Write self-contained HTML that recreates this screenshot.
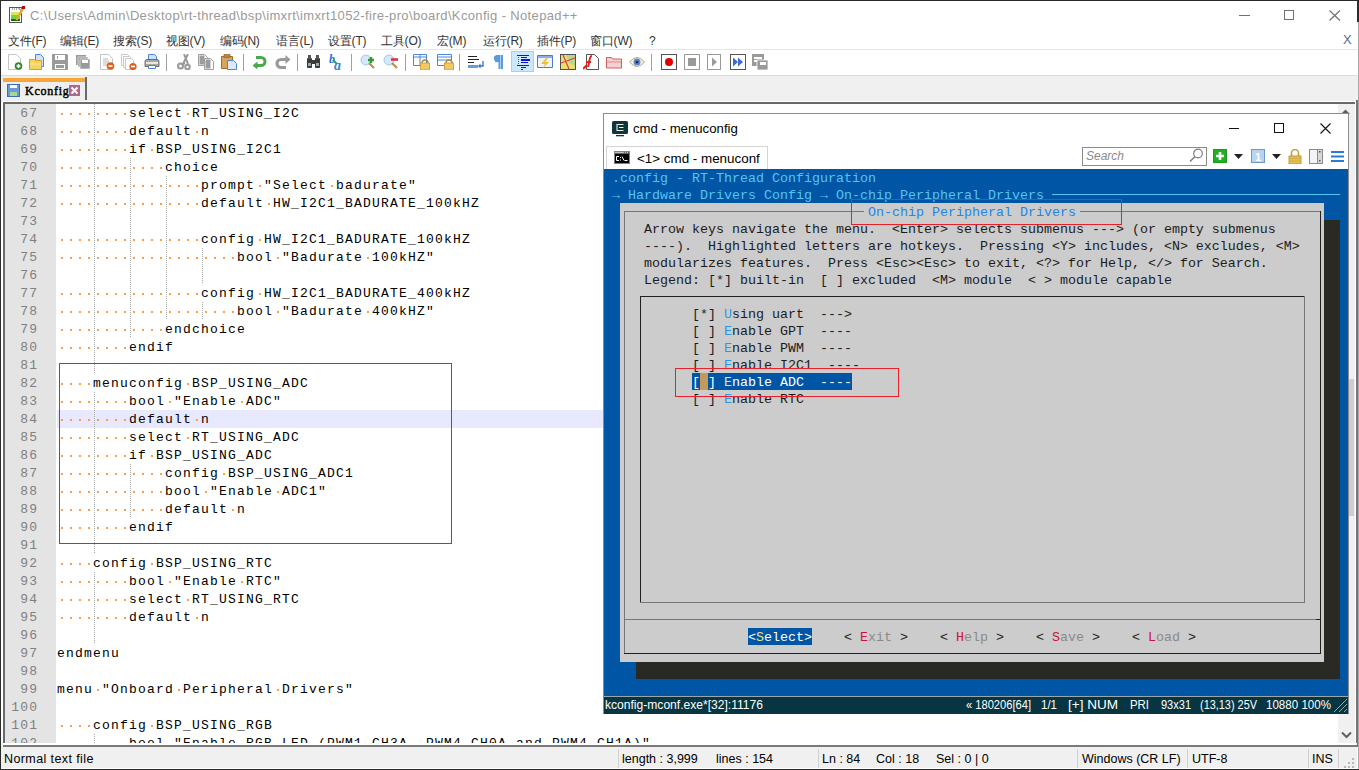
<!DOCTYPE html><html><head><meta charset="utf-8"><style>
*{margin:0;padding:0;box-sizing:border-box}
html,body{width:1359px;height:770px;overflow:hidden;background:#fff}
body{position:relative;font-family:"Liberation Sans",sans-serif}
.a{position:absolute}
.ui{font-family:"Liberation Sans",sans-serif;font-size:12px;color:#000;white-space:pre}
.code{position:absolute;left:57px;margin-top:1px;font-family:"Liberation Mono",monospace;font-size:13px;letter-spacing:1.2px;line-height:18px;height:18px;white-space:pre;color:#000}
.code i{display:inline-block;vertical-align:top;width:9px;height:18px;background:linear-gradient(#ff9d45,#ff9d45) no-repeat 4px 8px/2px 2px}
.ln{position:absolute;left:5px;margin-top:1px;width:33.2px;text-align:right;font-family:"Liberation Mono",monospace;font-size:13px;letter-spacing:1.2px;line-height:18px;height:18px;color:#808080;white-space:pre}
.g{position:absolute;width:1px;background:repeating-linear-gradient(to bottom,#a8a8a8 0,#a8a8a8 1px,transparent 1px,transparent 2px)}
.con{position:absolute;margin-top:1px;font-family:"Liberation Mono",monospace;font-size:13.33px;line-height:17px;height:17px;white-space:pre;letter-spacing:0}
</style></head><body>
<div class="a" style="left:0;top:0;width:1359px;height:1px;background:#2b2b2b"></div>
<div class="a" style="left:0;top:0;width:1px;height:770px;background:#2b2b2b"></div>
<div class="a ui" style="left:30px;top:7px;font-size:13px;letter-spacing:0.35px;color:#9a9a9a;line-height:18px">C:\Users\Admin\Desktop\rt-thread\bsp\imxrt\imxrt1052-fire-pro\board\Kconfig - Notepad++</div>
<svg class="a" style="left:9px;top:6px" width="17" height="18" viewBox="0 0 17 18"><rect x="0.5" y="1.5" width="12" height="15" fill="#fff" stroke="#555" stroke-width="1"/><path d="M9 1.5l3.5 3.5" stroke="#555"/><rect x="2" y="6" width="9" height="9" fill="#7ad040"/><rect x="2" y="6" width="9" height="3" fill="#d8e860"/><rect x="2" y="13" width="9" height="2" fill="#107010"/><path d="M14.5 1.5L7.5 14" stroke="#f0a820" stroke-width="2.4"/><rect x="13" y="0" width="3" height="3" fill="#a01010"/><path d="M3 3h1M5 3h1M7 3h1" stroke="#555" stroke-width="1.2"/></svg>
<div class="a" style="left:1239px;top:15px;width:11px;height:1px;background:#707070"></div>
<div class="a" style="left:1284px;top:10px;width:10px;height:10px;border:1px solid #707070"></div>
<svg class="a" style="left:1329px;top:10px" width="12" height="11"><path d="M0.5 0.5L11 10.5M11 0.5L0.5 10.5" stroke="#707070" stroke-width="1.1" fill="none"/></svg>
<div class="a ui" style="left:8px;top:33px;font-size:12px;letter-spacing:-0.2px;color:#333;line-height:16px">文件(F)</div>
<div class="a ui" style="left:60px;top:33px;font-size:12px;letter-spacing:-0.2px;color:#333;line-height:16px">编辑(E)</div>
<div class="a ui" style="left:113px;top:33px;font-size:12px;letter-spacing:-0.2px;color:#333;line-height:16px">搜索(S)</div>
<div class="a ui" style="left:166px;top:33px;font-size:12px;letter-spacing:-0.2px;color:#333;line-height:16px">视图(V)</div>
<div class="a ui" style="left:220px;top:33px;font-size:12px;letter-spacing:-0.2px;color:#333;line-height:16px">编码(N)</div>
<div class="a ui" style="left:276px;top:33px;font-size:12px;letter-spacing:-0.2px;color:#333;line-height:16px">语言(L)</div>
<div class="a ui" style="left:328px;top:33px;font-size:12px;letter-spacing:-0.2px;color:#333;line-height:16px">设置(T)</div>
<div class="a ui" style="left:381px;top:33px;font-size:12px;letter-spacing:-0.2px;color:#333;line-height:16px">工具(O)</div>
<div class="a ui" style="left:437px;top:33px;font-size:12px;letter-spacing:-0.2px;color:#333;line-height:16px">宏(M)</div>
<div class="a ui" style="left:483px;top:33px;font-size:12px;letter-spacing:-0.2px;color:#333;line-height:16px">运行(R)</div>
<div class="a ui" style="left:537px;top:33px;font-size:12px;letter-spacing:-0.2px;color:#333;line-height:16px">插件(P)</div>
<div class="a ui" style="left:590px;top:33px;font-size:12px;letter-spacing:-0.2px;color:#333;line-height:16px">窗口(W)</div>
<div class="a ui" style="left:649px;top:33px;font-size:12px;letter-spacing:-0.2px;color:#333;line-height:16px">?</div>
<div class="a ui" style="left:1343px;top:32px;font-size:13px;color:#5a6a8a;line-height:16px">X</div>
<div class="a" style="left:1px;top:49px;width:1356px;height:1px;background:#e6e6e6"></div>
<div class="a" style="left:1px;top:75px;width:1356px;height:1px;background:#dadada"></div>
<div class="a" style="left:1px;top:76px;width:1357px;height:26px;background:#f0f0f0"></div>
<div class="a" style="left:3px;top:101px;width:1353px;height:1px;background:#fff"></div>
<svg class="a" style="left:7px;top:54px" width="16" height="16" viewBox="0 0 16 16"><path d="M1.5 0.5h8l4 4v11h-12z" fill="#fff" stroke="#c4c4c4"/><circle cx="11.5" cy="12" r="3.8" fill="#2f8a2f"/><path d="M9.5 12h4M11.5 10v4" stroke="#fff" stroke-width="1.6"/></svg>
<svg class="a" style="left:29px;top:54px" width="16" height="16" viewBox="0 0 16 16"><path d="M6.5 0.5h5l3 3v9h-8z" fill="#cfe2fb" stroke="#4a86d8"/><path d="M0.5 5.5h5l1 1h6v9h-12z" fill="#f7d55a" stroke="#e49a2a"/><path d="M1 10h11" stroke="#fbe9a0"/></svg>
<svg class="a" style="left:52px;top:54px" width="16" height="16" viewBox="0 0 16 16"><path d="M0 0h15l1 1v15h-16z" fill="#9a9a9a"/><rect x="3" y="1" width="10" height="5" fill="#fff"/><rect x="5" y="2" width="1" height="3" fill="#9a9a9a"/><rect x="3" y="10" width="10" height="5" fill="#fff"/><rect x="4" y="11" width="8" height="3" fill="#9a9a9a"/></svg>
<svg class="a" style="left:76px;top:54px" width="16" height="16" viewBox="0 0 16 16"><path d="M0 1h10v10h-10z" fill="#9a9a9a"/><path d="M2 3h10v10h-10z" fill="#9a9a9a" stroke="#fff" stroke-width="0.6"/><path d="M4 5h10v10h-10z" fill="#9a9a9a" stroke="#fff" stroke-width="0.6"/><rect x="6" y="6" width="6" height="3" fill="#fff"/></svg>
<svg class="a" style="left:99px;top:54px" width="16" height="16" viewBox="0 0 16 16"><path d="M1.5 0.5h8l4 4v11h-12z" fill="#fff" stroke="#c4c4c4"/><path d="M4 5h5M4 7h6M4 9h6M4 11h4" stroke="#b8b8b8"/><circle cx="11.5" cy="12" r="3.8" fill="#e2601a"/><path d="M9.5 12h4" stroke="#fff" stroke-width="1.6"/></svg>
<svg class="a" style="left:121px;top:54px" width="16" height="16" viewBox="0 0 16 16"><path d="M0.5 0.5h6l2 2v9h-8z" fill="#fff" stroke="#c8c8c8"/><path d="M2.5 2.5h6l2 2v9h-8z" fill="#fff" stroke="#c8c8c8"/><path d="M4.5 4.5h6l2 2v9h-8z" fill="#fff" stroke="#c8c8c8"/><circle cx="12" cy="12.5" r="3.6" fill="#e2601a"/><path d="M10 12.5h4" stroke="#fff" stroke-width="1.6"/></svg>
<svg class="a" style="left:144px;top:54px" width="16" height="16" viewBox="0 0 16 16"><path d="M4.5 0.5h6l2 2v5h-8z" fill="#cfe2fb" stroke="#4a86d8"/><path d="M1 7.5q0-2 2-2h10q2 0 2 2v5h-14z" fill="#a8a8a8" stroke="#555" stroke-width="0.8"/><rect x="2" y="8" width="12" height="2" fill="#e8e8e8"/><path d="M4.5 11.5h7v3h-7z" fill="#fff" stroke="#4a86d8"/></svg>
<div class="a" style="left:166px;top:54px;width:1px;height:17px;background:#a0a0a0"></div>
<svg class="a" style="left:177px;top:54px" width="16" height="16" viewBox="0 0 16 16"><path d="M11 0L6 10M7 0l4 10" stroke="#9a9a9a" stroke-width="2" fill="none"/><circle cx="3.5" cy="12" r="2.5" fill="none" stroke="#9a9a9a" stroke-width="2"/><circle cx="10.5" cy="13" r="2.3" fill="none" stroke="#9a9a9a" stroke-width="2"/><path d="M5 11l3-2" stroke="#9a9a9a" stroke-width="2"/></svg>
<svg class="a" style="left:198px;top:54px" width="16" height="16" viewBox="0 0 16 16"><path d="M0.5 0.5h6l3 3v8h-9z" fill="#fff" stroke="#a0a0a0"/><rect x="1.5" y="1.5" width="5" height="9" fill="#9c9c9c"/><path d="M6.5 4.5h6l3 3v8h-9z" fill="#fff" stroke="#a0a0a0"/><rect x="7.5" y="5.5" width="5" height="9" fill="#9c9c9c"/></svg>
<svg class="a" style="left:221px;top:54px" width="16" height="16" viewBox="0 0 16 16"><path d="M0.5 2.5h11v12h-11z" fill="#d9a45c" stroke="#a86c28"/><rect x="3" y="0.5" width="6" height="3" fill="#c08040" stroke="#8a5a20" stroke-width="0.6"/><path d="M6.5 6.5h6l3 3v6h-9z" fill="#dde9fb" stroke="#4a86d8"/></svg>
<div class="a" style="left:243px;top:54px;width:1px;height:17px;background:#a0a0a0"></div>
<svg class="a" style="left:252px;top:54px" width="16" height="16" viewBox="0 0 16 16"><path d="M4 3.5h5a4 4 0 0 1 0 8h-5" fill="none" stroke="#4aa84a" stroke-width="3"/><path d="M0.5 11.5l5-4v8z" fill="#4aa84a"/></svg>
<svg class="a" style="left:275px;top:54px" width="16" height="16" viewBox="0 0 16 16"><path d="M11 5.5h-5a4 4 0 0 0 0 8h5" fill="none" stroke="#9a9a9a" stroke-width="3.2"/><path d="M15.5 5.5l-5-4.5v9z" fill="#9a9a9a"/></svg>
<div class="a" style="left:297px;top:54px;width:1px;height:17px;background:#a0a0a0"></div>
<svg class="a" style="left:306px;top:54px" width="16" height="16" viewBox="0 0 16 16"><rect x="1" y="4" width="5" height="10" rx="1" fill="#3a3a3a"/><rect x="9" y="4" width="5" height="10" rx="1" fill="#3a3a3a"/><rect x="5" y="6" width="5" height="4" fill="#3a3a3a"/><rect x="2" y="1" width="3" height="4" fill="#555"/><rect x="10" y="1" width="3" height="4" fill="#555"/><rect x="2" y="9" width="3" height="3" fill="#9aa"/><rect x="10" y="9" width="3" height="3" fill="#9aa"/></svg>
<svg class="a" style="left:329px;top:54px" width="17" height="16" viewBox="0 0 17 16"><text x="0" y="9" font-family="Liberation Serif" font-style="italic" font-weight="bold" font-size="12" fill="#2a70e0">b</text><text x="5" y="16" font-family="Liberation Serif" font-style="italic" font-weight="bold" font-size="14" fill="#3a80e8">a</text><path d="M4 6l4 4" stroke="#2a9a4a" stroke-width="1.8"/></svg>
<div class="a" style="left:351px;top:54px;width:1px;height:17px;background:#a0a0a0"></div>
<svg class="a" style="left:360px;top:54px" width="16" height="16" viewBox="0 0 16 16"><circle cx="6" cy="6" r="5" fill="#d6e8fa" stroke="#a8c8e8"/><path d="M9 9l5 5" stroke="#c08a50" stroke-width="2.2"/><path d="M8 6h6M11 3v6" stroke="#2e9a2e" stroke-width="2.4"/></svg>
<svg class="a" style="left:383px;top:54px" width="16" height="16" viewBox="0 0 16 16"><circle cx="6" cy="6" r="5" fill="#d6e8fa" stroke="#a8c8e8"/><path d="M9 9l5 5" stroke="#c08a50" stroke-width="2.2"/><path d="M8 5.5h7" stroke="#e03040" stroke-width="2.6"/></svg>
<div class="a" style="left:405px;top:54px;width:1px;height:17px;background:#a0a0a0"></div>
<svg class="a" style="left:413px;top:54px" width="17" height="16" viewBox="0 0 17 16"><path d="M0.5 0.5h13v11h-13z" fill="#fff" stroke="#4a86d8"/><path d="M1 3h12" stroke="#4a86d8"/><path d="M7 1v10" stroke="#4a86d8"/><path d="M9 9a3 3 0 0 1 6 0" fill="none" stroke="#a88a40" stroke-width="1.4"/><rect x="7.5" y="9" width="9" height="7" fill="#f2c860" stroke="#c89a30" stroke-width="0.8"/></svg>
<svg class="a" style="left:437px;top:54px" width="17" height="16" viewBox="0 0 17 16"><path d="M0.5 0.5h14v11h-14z" fill="#fff" stroke="#4a86d8"/><path d="M1 3h13M1 6h13" stroke="#4a86d8"/><path d="M9 9a3 3 0 0 1 6 0" fill="none" stroke="#a88a40" stroke-width="1.4"/><rect x="7.5" y="9" width="9" height="7" fill="#f2c860" stroke="#c89a30" stroke-width="0.8"/></svg>
<div class="a" style="left:459px;top:54px;width:1px;height:17px;background:#a0a0a0"></div>
<svg class="a" style="left:468px;top:54px" width="16" height="16" viewBox="0 0 16 16"><path d="M0 2.5h9M0 5.5h11M0 8.5h6" stroke="#222" stroke-width="1"/><rect x="0" y="11" width="10" height="3" fill="#6a9ae0"/><path d="M15 7v5h-4" fill="none" stroke="#3a6ac0" stroke-width="1.3"/><path d="M10 12l2.5-2.5v5z" fill="#3a6ac0"/></svg>
<svg class="a" style="left:493px;top:54px" width="12" height="16" viewBox="0 0 12 16"><path d="M3.5 1h4v14h-2v-7a3.5 3.5 0 0 1 -2-7z" fill="#5a9ae0"/><rect x="8" y="1" width="2" height="14" fill="#5a9ae0"/></svg>
<div class="a" style="left:511px;top:51px;width:23px;height:21px;background:#cce8ff;border:1px solid #99d1ff"></div>
<svg class="a" style="left:515px;top:54px" width="16" height="16" viewBox="0 0 16 16"><path d="M2 1.5h12M6 3.5h6M6 6h9M6 8.5h7M2 11.5h12M6 13.5h5M6 15.5h2" stroke="#1414d8" stroke-width="1"/><rect x="6" y="5" width="9" height="2" fill="#1414d8"/><path d="M3.5 3v8" stroke="#e02828" stroke-dasharray="1 1"/></svg>
<svg class="a" style="left:537px;top:54px" width="16" height="16" viewBox="0 0 16 16"><path d="M0.5 1.5h15v12h-15z" fill="#eef4fb" stroke="#4a7ac8"/><path d="M1 3h14" stroke="#6a9ae0" stroke-width="1.5"/><path d="M9 4l-5 6h4l-3 5 7-7h-4l3-4z" fill="#f0c030"/></svg>
<svg class="a" style="left:560px;top:54px" width="16" height="16" viewBox="0 0 16 16"><rect x="0.5" y="0.5" width="15" height="15" fill="#b8d890" stroke="#505050"/><path d="M1 1l5 0 3 8 6 3v3h-14z" fill="#e8e070"/><path d="M3 1l6 14M1 9l14-5" stroke="#e04040" stroke-width="1.2"/></svg>
<svg class="a" style="left:583px;top:54px" width="16" height="16" viewBox="0 0 16 16"><path d="M3.5 0.5h8l4 4v11h-12z" fill="#fff" stroke="#555"/><path d="M9 2c-3 0-2 5-4 11M3 8h5" stroke="#e02020" stroke-width="2" fill="none"/><path d="M0 15l4-4" stroke="#e02020" stroke-width="2"/></svg>
<svg class="a" style="left:606px;top:54px" width="16" height="16" viewBox="0 0 16 16"><path d="M0.5 3.5h5l1 1.5h9v9h-15z" fill="#f6d0d0" stroke="#d06060"/><path d="M1 8h14" stroke="#d88"/></svg>
<svg class="a" style="left:629px;top:54px" width="16" height="16" viewBox="0 0 16 16"><path d="M0.5 8q7.5-9 15 0q-7.5 9-15 0z" fill="#f4f0e8" stroke="#c8a070"/><circle cx="8" cy="8" r="3.5" fill="#5a8ad0"/><circle cx="8" cy="8" r="1.5" fill="#203060"/></svg>
<div class="a" style="left:651px;top:54px;width:1px;height:17px;background:#a0a0a0"></div>
<svg class="a" style="left:661px;top:54px" width="16" height="16" viewBox="0 0 16 16"><rect x="0.5" y="0.5" width="15" height="15" fill="#fff" stroke="#555"/><circle cx="8" cy="8" r="4" fill="#e00000"/></svg>
<svg class="a" style="left:684px;top:54px" width="16" height="16" viewBox="0 0 16 16"><rect x="0.5" y="0.5" width="15" height="15" fill="#fff" stroke="#999"/><rect x="4" y="4" width="8" height="8" fill="#9a9a9a"/></svg>
<svg class="a" style="left:707px;top:54px" width="14" height="16" viewBox="0 0 14 16"><rect x="0.5" y="0.5" width="13" height="15" fill="#fff" stroke="#999"/><path d="M5 3.5l5 4.5-5 4.5z" fill="#9a9a9a"/></svg>
<svg class="a" style="left:730px;top:54px" width="16" height="16" viewBox="0 0 16 16"><rect x="0.5" y="0.5" width="15" height="15" fill="#fff" stroke="#555"/><path d="M3 3.5l5 4.5-5 4.5zM8 3.5l5 4.5-5 4.5z" fill="#3a6ad8"/></svg>
<svg class="a" style="left:752px;top:54px" width="16" height="16" viewBox="0 0 16 16"><rect x="0" y="0" width="12" height="12" fill="#9a9a9a"/><rect x="2" y="3" width="8" height="2" fill="#fff"/><rect x="2" y="6" width="3" height="2" fill="#fff"/><rect x="5" y="6" width="11" height="10" fill="#9a9a9a" stroke="#fff" stroke-width="0.8"/><rect x="8" y="8" width="6" height="3" fill="#fff"/></svg>
<div class="a" style="left:3px;top:77px;width:83px;height:24px;background:#efefef"></div>
<div class="a" style="left:3px;top:78px;width:82px;height:4px;background:#faa538"></div>
<div class="a" style="left:85px;top:77px;width:2px;height:23px;background:#6a6a6a"></div>
<svg class="a" style="left:7px;top:84px" width="13" height="13" viewBox="0 0 13 13"><rect x="0.5" y="0.5" width="12" height="12" fill="#6a9ad8" stroke="#3a6ab8"/><rect x="3" y="1" width="7" height="3" fill="#fff"/><rect x="3" y="8" width="7" height="4" fill="#a8d890"/></svg>
<div class="a" style="left:25px;top:83px;font-family:'Liberation Serif',serif;font-size:12px;line-height:16px;font-weight:normal;-webkit-text-stroke:0.45px #000;color:#000;letter-spacing:0.75px">Kconfig</div>
<svg class="a" style="left:69px;top:85px" width="11" height="11" viewBox="0 0 11 11"><rect x="0" y="0" width="11" height="11" fill="#b06888"/><path d="M2.5 2.5l6 6M8.5 2.5l-6 6" stroke="#fff" stroke-width="2"/></svg>
<div class="a" style="left:3px;top:102px;width:1353px;height:2px;background:#6a6a6a"></div>
<div class="a" style="left:3px;top:102px;width:2px;height:643px;background:#6a6a6a"></div>
<div class="a" style="left:5px;top:104px;width:51px;height:640px;background:#e4e4e4"></div>
<div class="a" style="left:57px;top:410px;width:1281px;height:18px;background:#e8e8ff"></div>
<div class="a" style="left:1338px;top:104px;width:17px;height:639px;background:#f0f0f0"></div>
<svg class="a" style="left:1341px;top:109px" width="9" height="5"><path d="M0 5L4.5 0.5L9 5z" fill="#606060"/></svg>
<svg class="a" style="left:1341px;top:731px" width="11" height="8"><path d="M1 1.5l4.5 4.5L10 1.5" stroke="#606060" stroke-width="2" fill="none"/></svg>
<div class="a" style="left:1355px;top:102px;width:1px;height:644px;background:#fff"></div>
<div class="a" style="left:1356px;top:100px;width:2px;height:647px;background:#767676"></div>
<div class="a" style="left:1357px;top:0;width:2px;height:22px;background:#2b2b2b"></div>
<div class="a" style="left:1358px;top:22px;width:1px;height:748px;background:#a8a8a8"></div>
<div class="a" style="left:1349px;top:379px;width:5px;height:137px;background:#cdcdcd"></div>
<div class="g" style="left:94px;top:104px;height:270px"></div>
<div class="g" style="left:94px;top:392px;height:162px"></div>
<div class="g" style="left:94px;top:572px;height:72px"></div>
<div class="g" style="left:94px;top:734px;height:10px"></div>
<div class="g" style="left:130px;top:158px;height:180px"></div>
<div class="g" style="left:130px;top:464px;height:54px"></div>
<div class="g" style="left:166px;top:176px;height:144px"></div>
<div class="g" style="left:202px;top:248px;height:36px"></div>
<div class="g" style="left:202px;top:302px;height:18px"></div>
<div class="ln" style="top:104px">67</div>
<div class="code" style="top:104px"><i></i><i></i><i></i><i></i><i></i><i></i><i></i><i></i>select<i></i>RT_USING_I2C</div>
<div class="ln" style="top:122px">68</div>
<div class="code" style="top:122px"><i></i><i></i><i></i><i></i><i></i><i></i><i></i><i></i>default<i></i>n</div>
<div class="ln" style="top:140px">69</div>
<div class="code" style="top:140px"><i></i><i></i><i></i><i></i><i></i><i></i><i></i><i></i>if<i></i>BSP_USING_I2C1</div>
<div class="ln" style="top:158px">70</div>
<div class="code" style="top:158px"><i></i><i></i><i></i><i></i><i></i><i></i><i></i><i></i><i></i><i></i><i></i><i></i>choice</div>
<div class="ln" style="top:176px">71</div>
<div class="code" style="top:176px"><i></i><i></i><i></i><i></i><i></i><i></i><i></i><i></i><i></i><i></i><i></i><i></i><i></i><i></i><i></i><i></i>prompt<i></i>&quot;Select<i></i>badurate&quot;</div>
<div class="ln" style="top:194px">72</div>
<div class="code" style="top:194px"><i></i><i></i><i></i><i></i><i></i><i></i><i></i><i></i><i></i><i></i><i></i><i></i><i></i><i></i><i></i><i></i>default<i></i>HW_I2C1_BADURATE_100kHZ</div>
<div class="ln" style="top:212px">73</div>
<div class="ln" style="top:230px">74</div>
<div class="code" style="top:230px"><i></i><i></i><i></i><i></i><i></i><i></i><i></i><i></i><i></i><i></i><i></i><i></i><i></i><i></i><i></i><i></i>config<i></i>HW_I2C1_BADURATE_100kHZ</div>
<div class="ln" style="top:248px">75</div>
<div class="code" style="top:248px"><i></i><i></i><i></i><i></i><i></i><i></i><i></i><i></i><i></i><i></i><i></i><i></i><i></i><i></i><i></i><i></i><i></i><i></i><i></i><i></i>bool<i></i>&quot;Badurate<i></i>100kHZ&quot;</div>
<div class="ln" style="top:266px">76</div>
<div class="ln" style="top:284px">77</div>
<div class="code" style="top:284px"><i></i><i></i><i></i><i></i><i></i><i></i><i></i><i></i><i></i><i></i><i></i><i></i><i></i><i></i><i></i><i></i>config<i></i>HW_I2C1_BADURATE_400kHZ</div>
<div class="ln" style="top:302px">78</div>
<div class="code" style="top:302px"><i></i><i></i><i></i><i></i><i></i><i></i><i></i><i></i><i></i><i></i><i></i><i></i><i></i><i></i><i></i><i></i><i></i><i></i><i></i><i></i>bool<i></i>&quot;Badurate<i></i>400kHZ&quot;</div>
<div class="ln" style="top:320px">79</div>
<div class="code" style="top:320px"><i></i><i></i><i></i><i></i><i></i><i></i><i></i><i></i><i></i><i></i><i></i><i></i>endchoice</div>
<div class="ln" style="top:338px">80</div>
<div class="code" style="top:338px"><i></i><i></i><i></i><i></i><i></i><i></i><i></i><i></i>endif</div>
<div class="ln" style="top:356px">81</div>
<div class="ln" style="top:374px">82</div>
<div class="code" style="top:374px"><i></i><i></i><i></i><i></i>menuconfig<i></i>BSP_USING_ADC</div>
<div class="ln" style="top:392px">83</div>
<div class="code" style="top:392px"><i></i><i></i><i></i><i></i><i></i><i></i><i></i><i></i>bool<i></i>&quot;Enable<i></i>ADC&quot;</div>
<div class="ln" style="top:410px">84</div>
<div class="code" style="top:410px"><i></i><i></i><i></i><i></i><i></i><i></i><i></i><i></i>default<i></i>n</div>
<div class="ln" style="top:428px">85</div>
<div class="code" style="top:428px"><i></i><i></i><i></i><i></i><i></i><i></i><i></i><i></i>select<i></i>RT_USING_ADC</div>
<div class="ln" style="top:446px">86</div>
<div class="code" style="top:446px"><i></i><i></i><i></i><i></i><i></i><i></i><i></i><i></i>if<i></i>BSP_USING_ADC</div>
<div class="ln" style="top:464px">87</div>
<div class="code" style="top:464px"><i></i><i></i><i></i><i></i><i></i><i></i><i></i><i></i><i></i><i></i><i></i><i></i>config<i></i>BSP_USING_ADC1</div>
<div class="ln" style="top:482px">88</div>
<div class="code" style="top:482px"><i></i><i></i><i></i><i></i><i></i><i></i><i></i><i></i><i></i><i></i><i></i><i></i>bool<i></i>&quot;Enable<i></i>ADC1&quot;</div>
<div class="ln" style="top:500px">89</div>
<div class="code" style="top:500px"><i></i><i></i><i></i><i></i><i></i><i></i><i></i><i></i><i></i><i></i><i></i><i></i>default<i></i>n</div>
<div class="ln" style="top:518px">90</div>
<div class="code" style="top:518px"><i></i><i></i><i></i><i></i><i></i><i></i><i></i><i></i>endif</div>
<div class="ln" style="top:536px">91</div>
<div class="ln" style="top:554px">92</div>
<div class="code" style="top:554px"><i></i><i></i><i></i><i></i>config<i></i>BSP_USING_RTC</div>
<div class="ln" style="top:572px">93</div>
<div class="code" style="top:572px"><i></i><i></i><i></i><i></i><i></i><i></i><i></i><i></i>bool<i></i>&quot;Enable<i></i>RTC&quot;</div>
<div class="ln" style="top:590px">94</div>
<div class="code" style="top:590px"><i></i><i></i><i></i><i></i><i></i><i></i><i></i><i></i>select<i></i>RT_USING_RTC</div>
<div class="ln" style="top:608px">95</div>
<div class="code" style="top:608px"><i></i><i></i><i></i><i></i><i></i><i></i><i></i><i></i>default<i></i>n</div>
<div class="ln" style="top:626px">96</div>
<div class="ln" style="top:644px">97</div>
<div class="code" style="top:644px">endmenu</div>
<div class="ln" style="top:662px">98</div>
<div class="ln" style="top:680px">99</div>
<div class="code" style="top:680px">menu<i></i>&quot;Onboard<i></i>Peripheral<i></i>Drivers&quot;</div>
<div class="ln" style="top:698px">100</div>
<div class="ln" style="top:716px">101</div>
<div class="code" style="top:716px"><i></i><i></i><i></i><i></i>config<i></i>BSP_USING_RGB</div>
<div class="ln" style="top:734px">102</div>
<div class="code" style="top:734px"><i></i><i></i><i></i><i></i><i></i><i></i><i></i><i></i>bool<i></i>&quot;Enable<i></i>RGB<i></i>LED<i></i>(PWM1_CH3A,<i></i>PWM4_CH0A<i></i>and<i></i>PWM4_CH1A)&quot;</div>
<div class="a" style="left:1px;top:743px;width:1356px;height:27px;background:#f0f0f0"></div>
<div class="a" style="left:3px;top:743px;width:1353px;height:2px;background:#fff"></div>
<div class="a" style="left:3px;top:745px;width:1354px;height:2px;background:#7a7a7a"></div>
<div class="a" style="left:1px;top:768px;width:1356px;height:1px;background:#fff"></div>
<div class="a" style="left:0;top:769px;width:1359px;height:1px;background:#2b2b2b"></div>
<div class="a ui" style="left:4px;top:751px;font-size:12.5px;letter-spacing:0.4px;color:#000;line-height:16px">Normal text file</div>
<div class="a" style="left:618px;top:749px;width:1px;height:19px;background:#d0d0d0"></div>
<div class="a" style="left:818px;top:749px;width:1px;height:19px;background:#d0d0d0"></div>
<div class="a" style="left:1077px;top:749px;width:1px;height:19px;background:#d0d0d0"></div>
<div class="a" style="left:1187px;top:749px;width:1px;height:19px;background:#d0d0d0"></div>
<div class="a" style="left:1308px;top:749px;width:1px;height:19px;background:#d0d0d0"></div>
<div class="a" style="left:1338px;top:749px;width:1px;height:19px;background:#d0d0d0"></div>
<div class="a ui" style="left:622px;top:751px;font-size:12.5px;color:#000;line-height:16px">length : 3,999</div>
<div class="a ui" style="left:716px;top:751px;font-size:12.5px;color:#000;line-height:16px">lines : 154</div>
<div class="a ui" style="left:822px;top:751px;font-size:12.5px;color:#000;line-height:16px">Ln : 84</div>
<div class="a ui" style="left:876px;top:751px;font-size:12.5px;color:#000;line-height:16px">Col : 18</div>
<div class="a ui" style="left:936px;top:751px;font-size:12.5px;color:#000;line-height:16px">Sel : 0 | 0</div>
<div class="a ui" style="left:1082px;top:751px;font-size:12.5px;color:#000;line-height:16px">Windows (CR LF)</div>
<div class="a ui" style="left:1192px;top:751px;font-size:12.5px;color:#000;line-height:16px">UTF-8</div>
<div class="a ui" style="left:1312px;top:751px;font-size:12.5px;color:#000;line-height:16px">INS</div>
<div class="a" style="left:1352px;top:766px;width:2px;height:2px;background:#b8b8b8"></div>
<div class="a" style="left:1348px;top:766px;width:2px;height:2px;background:#b8b8b8"></div>
<div class="a" style="left:1344px;top:766px;width:2px;height:2px;background:#b8b8b8"></div>
<div class="a" style="left:1352px;top:762px;width:2px;height:2px;background:#b8b8b8"></div>
<div class="a" style="left:1348px;top:762px;width:2px;height:2px;background:#b8b8b8"></div>
<div class="a" style="left:1352px;top:758px;width:2px;height:2px;background:#b8b8b8"></div>
<div class="a" style="left:59px;top:363px;width:393px;height:181px;border:1px solid #e0202a"></div>
<div class="a" style="left:603px;top:113px;width:746px;height:601px;background:#fff;border:1px solid #8c8c8c"></div>
<svg class="a" style="left:612px;top:121px" width="16" height="16" viewBox="0 0 16 16"><rect x="0" y="0" width="16" height="13" rx="1.5" fill="#0d3540"/><path d="M11.5 3.5h-6.5v6h6.5M7 6.5h4.5" stroke="#f4ecd4" stroke-width="1.1" fill="none"/><rect x="4" y="14" width="8" height="1.3" fill="#0d3540"/></svg>
<div class="a ui" style="left:633px;top:120px;font-size:13.2px;line-height:18px;color:#000">cmd - menuconfig</div>
<div class="a" style="left:1229px;top:128px;width:10px;height:1px;background:#111"></div>
<div class="a" style="left:1274px;top:123px;width:10px;height:10px;border:1px solid #111"></div>
<svg class="a" style="left:1320px;top:123px" width="11" height="11"><path d="M0.5 0.5L10.5 10.5M10.5 0.5L0.5 10.5" stroke="#111" stroke-width="1.1"/></svg>
<div class="a" style="left:606px;top:146px;width:162px;height:23px;background:#fff;border:1px solid #d4d4d4;border-bottom:none"></div>
<svg class="a" style="left:614px;top:151px" width="16" height="13" viewBox="0 0 16 13"><rect x="0.5" y="0.5" width="15" height="12" fill="#000" stroke="#808080"/><rect x="1" y="1" width="14" height="1.5" fill="#c0c0c0"/><path d="M5 5.5h-2.5v4h2.5M6.5 6v1M6.5 8.5v1M8 5.5l2 4M10.5 9.5h3" stroke="#fff" stroke-width="1" fill="none"/><path d="M10 1.5h5" stroke="#606060" stroke-dasharray="1 1"/></svg>
<div class="a ui" style="left:637px;top:150px;font-size:13.4px;line-height:18px;color:#000">&lt;1&gt; cmd - menuconf</div>
<div class="a" style="left:1082px;top:147px;width:125px;height:19px;background:#fff;border:1px solid #8a8a8a"></div>
<div class="a ui" style="left:1086px;top:149px;font-size:12px;line-height:15px;color:#8a8a8a;font-style:italic">Search</div>
<svg class="a" style="left:1189px;top:148px" width="15" height="15" viewBox="0 0 15 15"><circle cx="9" cy="5.5" r="4.3" fill="none" stroke="#808080" stroke-width="1.2"/><path d="M6 8.5L1 13.5" stroke="#808080" stroke-width="1.6"/></svg>
<svg class="a" style="left:1213px;top:149px" width="14" height="14" viewBox="0 0 14 14"><rect x="0" y="0" width="14" height="14" rx="1.5" fill="#22b022" stroke="#108010"/><path d="M7 3v8M3 7h8" stroke="#fff" stroke-width="2.6"/></svg>
<svg class="a" style="left:1234px;top:154px" width="9" height="5" viewBox="0 0 9 5"><path d="M0 0h9l-4.5 5z" fill="#222"/></svg>
<svg class="a" style="left:1251px;top:149px" width="14" height="14" viewBox="0 0 14 14"><rect x="0.5" y="0.5" width="13" height="13" fill="#b8d4f0" stroke="#6a9ad0"/><text x="4" y="12" font-family="Liberation Sans" font-weight="bold" font-size="11" fill="#fff">1</text></svg>
<svg class="a" style="left:1272px;top:154px" width="9" height="5" viewBox="0 0 9 5"><path d="M0 0h9l-4.5 5z" fill="#222"/></svg>
<svg class="a" style="left:1288px;top:149px" width="14" height="15" viewBox="0 0 14 15"><path d="M3.5 7v-3a3.5 3.5 0 0 1 7 0v3" fill="none" stroke="#c8a040" stroke-width="1.6"/><rect x="1" y="7" width="12" height="8" fill="#e8c050" stroke="#b08a30" stroke-width="0.8"/><path d="M2 9.5h10M2 12h10" stroke="#c8a040" stroke-width="0.7"/></svg>
<svg class="a" style="left:1309px;top:149px" width="14" height="15" viewBox="0 0 14 15"><rect x="0.5" y="0.5" width="13" height="14" fill="#f4f4f4" stroke="#8a8a8a"/><rect x="8" y="1" width="5" height="13" fill="#d8d8d8"/><path d="M8.5 1v13" stroke="#8a8a8a"/><rect x="10" y="2" width="1.5" height="1.5" fill="#555"/><rect x="10" y="11" width="1.5" height="1.5" fill="#555"/></svg>
<svg class="a" style="left:1331px;top:150px" width="13" height="13" viewBox="0 0 13 13"><path d="M0 2h13M0 6.5h13M0 11h13" stroke="#2a7ad8" stroke-width="2"/></svg>
<div class="a" style="left:604px;top:169px;width:744px;height:527px;background:#0055a5"></div>
<div class="a" style="left:604px;top:696px;width:744px;height:18px;background:#073642;border-top:1px solid #9aa6a8"></div>
<div class="a ui" style="left:605px;top:697px;font-size:13px;line-height:16px;color:#fff;transform-origin:0 0;transform:scaleX(0.929)">kconfig-mconf.exe*[32]:11176</div>
<div class="a ui" style="left:966px;top:697px;font-size:13px;line-height:16px;color:#fff;transform-origin:0 0;transform:scaleX(0.856)">« 180206[64]</div>
<div class="a ui" style="left:1041px;top:697px;font-size:13px;line-height:16px;color:#fff;transform-origin:0 0;transform:scaleX(0.884)">1/1</div>
<div class="a ui" style="left:1068px;top:697px;font-size:13px;line-height:16px;color:#fff;transform-origin:0 0;transform:scaleX(1.042)">[+] NUM</div>
<div class="a ui" style="left:1130px;top:697px;font-size:13px;line-height:16px;color:#fff;transform-origin:0 0;transform:scaleX(0.876)">PRI</div>
<div class="a ui" style="left:1161px;top:697px;font-size:13px;line-height:16px;color:#fff;transform-origin:0 0;transform:scaleX(0.847)">93x31</div>
<div class="a ui" style="left:1200px;top:697px;font-size:13px;line-height:16px;color:#fff;transform-origin:0 0;transform:scaleX(0.839)">(13,13) 25V</div>
<div class="a ui" style="left:1266px;top:697px;font-size:13px;line-height:16px;color:#fff;transform-origin:0 0;transform:scaleX(0.890)">10880 100%</div>
<svg class="a" style="left:1333px;top:698px" width="15" height="15" viewBox="0 0 15 15"><path d="M14 1L1 14M14 6L6 14M14 11L11 14" stroke="#9aa6a8" stroke-width="1"/></svg>
<div class="con" style="left:612px;top:169px;color:#56c4f2;">.config - RT-Thread Configuration</div>
<div class="con" style="left:612px;top:186px;color:#56c4f2;">→ Hardware Drivers Config → On-chip Peripheral Drivers</div>
<div class="a" style="left:1052px;top:194px;width:288px;height:1px;background:#56c4f2"></div>
<div class="a" style="left:1324px;top:220px;width:16px;height:459px;background:#2a2a24"></div>
<div class="a" style="left:636px;top:662px;width:704px;height:17px;background:#2a2a24"></div>
<div class="a" style="left:620px;top:203px;width:704px;height:459px;background:#cccccc"></div>
<div class="a" style="left:624px;top:211px;width:241px;height:1px;background:#767676"></div>
<div class="a" style="left:1080px;top:211px;width:241px;height:1px;background:#767676"></div>
<div class="a" style="left:864px;top:211px;width:4px;height:1px;background:#cccccc"></div>
<div class="a" style="left:624px;top:211px;width:1px;height:443px;background:#767676"></div>
<div class="a" style="left:624px;top:653px;width:697px;height:1px;background:#202020"></div>
<div class="a" style="left:1320px;top:211px;width:1px;height:443px;background:#202020"></div>
<div class="con" style="left:868px;top:203px;color:#2186e8;">On-chip Peripheral Drivers</div>
<div class="con" style="left:644px;top:220px;color:#1c1c1c;">Arrow keys navigate the menu.  &lt;Enter&gt; selects submenus ---&gt; (or empty submenus</div>
<div class="con" style="left:644px;top:237px;color:#1c1c1c;">----).  Highlighted letters are hotkeys.  Pressing &lt;Y&gt; includes, &lt;N&gt; excludes, &lt;M&gt;</div>
<div class="con" style="left:644px;top:254px;color:#1c1c1c;">modularizes features.  Press &lt;Esc&gt;&lt;Esc&gt; to exit, &lt;?&gt; for Help, &lt;/&gt; for Search.</div>
<div class="con" style="left:644px;top:271px;color:#1c1c1c;">Legend: [*] built-in  [ ] excluded  &lt;M&gt; module  &lt; &gt; module capable</div>
<div class="a" style="left:640px;top:296px;width:665px;height:1px;background:#202020"></div>
<div class="a" style="left:640px;top:296px;width:1px;height:307px;background:#202020"></div>
<div class="a" style="left:640px;top:602px;width:665px;height:1px;background:#767676"></div>
<div class="a" style="left:1304px;top:296px;width:1px;height:307px;background:#767676"></div>
<div class="con" style="left:692px;top:305px;color:#1c1c1c;">[*] <span style="color:#2a98e8">U</span>sing uart  ---&gt;</div>
<div class="con" style="left:692px;top:322px;color:#1c1c1c;">[ ] <span style="color:#2a98e8">E</span>nable GPT  ----</div>
<div class="con" style="left:692px;top:339px;color:#1c1c1c;">[ ] <span style="color:#2a98e8">E</span>nable PWM  ----</div>
<div class="con" style="left:692px;top:356px;color:#1c1c1c;">[ ] <span style="color:#2a98e8">E</span>nable I2C1  ----</div>
<div class="con" style="left:692px;top:390px;color:#1c1c1c;">[ ] <span style="color:#2a98e8">E</span>nable RTC</div>
<div class="a" style="left:692px;top:373px;width:160px;height:17px;background:#0055a5"></div>
<div class="a" style="left:700px;top:373px;width:8px;height:17px;background:#c49a5c"></div>
<div class="con" style="left:692px;top:373px;color:#ffffff;">[ ] <span style="color:#e8e28a">E</span>nable ADC  ----</div>
<div class="a" style="left:624px;top:619px;width:697px;height:1px;background:#767676"></div>
<div class="a" style="left:624px;top:619px;width:4px;height:1px;background:#767676"></div>
<div class="a" style="left:1316px;top:619px;width:5px;height:1px;background:#202020"></div>
<div class="a" style="left:748px;top:628px;width:64px;height:17px;background:#0055a5"></div>
<div class="con" style="left:748px;top:628px;color:#ffffff;">&lt;<span style="color:#e8e28a">S</span>elect&gt;</div>
<div class="con" style="left:844px;top:628px;color:#1c1c1c;">&lt; <span style="color:#c8143c">E</span><span style="color:#8a8a8a">xit</span> &gt;</div>
<div class="con" style="left:940px;top:628px;color:#1c1c1c;">&lt; <span style="color:#c8143c">H</span><span style="color:#8a8a8a">elp</span> &gt;</div>
<div class="con" style="left:1036px;top:628px;color:#1c1c1c;">&lt; <span style="color:#c8143c">S</span><span style="color:#8a8a8a">ave</span> &gt;</div>
<div class="con" style="left:1132px;top:628px;color:#1c1c1c;">&lt; <span style="color:#c8143c">L</span><span style="color:#8a8a8a">oad</span> &gt;</div>
<div class="a" style="left:851px;top:199px;width:271px;height:26px;border:1px solid #e8202a"></div>
<div class="a" style="left:675px;top:368px;width:224px;height:29px;border:1px solid #e8202a"></div>
</body></html>
